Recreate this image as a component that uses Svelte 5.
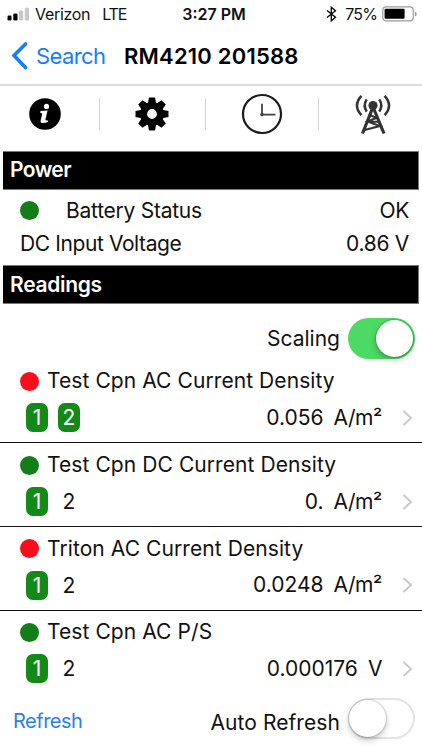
<script>
    let scaling = $state(true);
    let autoRefresh = $state(false);

    const readings = [
        { name: 'Test Cpn AC Current Density', color: 'red', value: '0.056', unit: 'A/m²', active: [1, 2] },
        { name: 'Test Cpn DC Current Density', color: 'green', value: '0.', unit: 'A/m²', active: [1] },
        { name: 'Triton AC Current Density', color: 'red', value: '0.0248', unit: 'A/m²', active: [1] },
        { name: 'Test Cpn AC P/S', color: 'green', value: '0.000176', unit: 'V', active: [1] }
    ];
</script>

<main>
    <div class="status-bar">
        <div class="carrier">
            <svg width="23" height="14" viewBox="0 0 23 14">
                <rect x="0.5" y="8.5" width="4" height="5" rx="1.2" fill="#000" />
                <rect x="6.3" y="6.5" width="4.2" height="7" rx="1.2" fill="#000" />
                <rect x="12" y="3.5" width="4.2" height="10" rx="1.2" fill="#c8c8c8" />
                <rect x="17.8" y="0.7" width="4.2" height="12.8" rx="1.2" fill="#c8c8c8" />
            </svg>
            <span class="network">Verizon</span>
            <span class="lte">LTE</span>
        </div>
        <span class="time">3:27 PM</span>
        <div class="power">
            <svg width="11" height="16" viewBox="0 0 11 16">
                <path d="M1 4.4L9.5 11.3L5.3 14.8V1.2L9.5 4.7L1 11.6" fill="none" stroke="#000" stroke-width="1.3" />
            </svg>
            <span class="percent">75%</span>
            <svg class="battery" width="36" height="16" viewBox="0 0 36 16">
                <rect x="0.8" y="0.8" width="30.4" height="14" rx="3" fill="#fff" stroke="#999" stroke-width="1.2" />
                <rect x="2.6" y="2.8" width="20" height="10" rx="1" fill="#000" />
                <path d="M32.8 5.4q2 .7 2 2.5t-2 2.5z" fill="#999" />
            </svg>
        </div>
    </div>

    <header>
        <button class="back">
            <svg width="18" height="30" viewBox="0 0 18 30">
                <path d="M15.5 3L4 14.5L15.5 26.5" fill="none" stroke="#147efb" stroke-width="3.6" stroke-linecap="round" />
            </svg>
            <span>Search</span>
        </button>
        <h1>RM4210 201588</h1>
    </header>

    <nav>
        <button aria-label="Info">
            <svg width="32" height="32" viewBox="0 0 32 32">
                <circle cx="16" cy="16" r="15.8" />
                <circle cx="17.5" cy="8.4" r="2.6" fill="#fff" />
                <path d="M11.5 13.1q3.7-.6 7.1-.7l-2.2 9.2q-.3 1.5 2.9.8l-.4 1.6q-3 1.2-5.7 1-2.1-.3-1.5-2.8l1.5-6.1q.3-1.3-2-1.2z" fill="#fff" />
            </svg>
        </button>
        <button aria-label="Settings">
            <svg width="34" height="34" viewBox="-17 -17 34 34">
                {#each [0, 45, 90, 135, 180, 225, 270, 315] as angle}
                    <path d="M-4.5-9L-3-16.5H3L4.5-9z" transform="rotate({angle})" />
                {/each}
                <circle r="8.4" fill="none" stroke="#000" stroke-width="7" />
            </svg>
        </button>
        <button aria-label="History">
            <svg width="42" height="42" viewBox="0 0 42 42" fill="none">
                <circle cx="21" cy="21" r="19" stroke="#1a1a1a" stroke-width="2.2" />
                <path d="M21 10.8V21.6H34.5" stroke="#444" stroke-width="1.8" />
                <circle cx="21" cy="21.6" r="1.8" fill="#444" />
            </svg>
        </button>
        <button aria-label="Radio">
            <svg width="36" height="42" viewBox="0 0 36 42" fill="none" stroke="#333" stroke-width="2.5">
                <circle cx="18" cy="12.5" r="4.6" fill="#333" stroke="none" />
                <path d="M18 14L7.5 40.5M18 14L29 40.5" stroke-width="3.2" />
                <path d="M15 22L21.5 25L12.5 28.5L25 33L9.5 37M13 28.7H23" stroke-width="2" />
                <path d="M11.7 6.4Q7.7 12.5 11.7 18.6M24.3 6.4Q28.3 12.5 24.3 18.6" />
                <path d="M6.4 2.8Q-2.5 12.5 6.4 22.2M29.6 2.8Q38.5 12.5 29.6 22.2" />
            </svg>
        </button>
    </nav>

    <h2>Power</h2>
    <section class="supply">
        <div class="line">
            <span class="dot green"></span>
            <span class="battery-label">Battery Status</span>
            <span class="amount">OK</span>
        </div>
        <div class="line">
            <span class="voltage-label">DC Input Voltage</span>
            <span class="amount">0.86 V</span>
        </div>
    </section>

    <h2 class="readings-title">Readings</h2>
    <div class="scaling">
        <span>Scaling</span>
        <button class="switch" class:on={scaling} aria-label="Scaling" onclick={() => (scaling = !scaling)}>
            <i></i>
        </button>
    </div>

    <section class="readings">
        {#each readings as reading}
            <article>
                <div class="name">
                    <span class="dot {reading.color}"></span>
                    <span>{reading.name}</span>
                </div>
                <div class="detail">
                    {#each [1, 2] as channel}
                        <span class="chip" class:active={reading.active.includes(channel)}>{channel}</span>
                    {/each}
                    <span class="value">{reading.value}</span>
                    <span class="unit">{reading.unit}</span>
                    <svg width="12" height="18" viewBox="0 0 12 18">
                        <path d="M1.5 2L9 9L1.5 16" fill="none" stroke="#c7c7cc" stroke-width="1.9" />
                    </svg>
                </div>
            </article>
        {/each}
    </section>

    <footer>
        <button class="refresh">Refresh</button>
        <span class="auto">Auto Refresh</span>
        <button class="switch" class:on={autoRefresh} aria-label="Auto Refresh" onclick={() => (autoRefresh = !autoRefresh)}>
            <i></i>
        </button>
    </footer>
</main>

<style>
    :global(body) { margin: 0; background: #fff; }
    main { width: 422px; height: 750px; overflow: hidden; background: #fff; color: #111; font-family: Inter, Roboto, sans-serif; font-size: 21px; line-height: 26px; white-space: nowrap; }
    button { margin: 0; padding: 0; border: 0; background: none; font: inherit; color: inherit; cursor: pointer; }
    svg { display: block; flex: none; }

    .status-bar { display: grid; grid-template-columns: 1fr auto 1fr; align-items: center; height: 28px; padding: 0 7px; font-size: 16px; line-height: 20px; }
    .carrier { display: flex; align-items: center; }
    .network { margin-left: 5px; letter-spacing: -0.3px; }
    .lte { margin-left: 12px; letter-spacing: -1.2px; }
    .time { margin-left: 6px; font-weight: 600; }
    .power { display: flex; align-items: center; justify-content: flex-end; }
    .percent { margin-left: 8px; letter-spacing: -0.9px; }
    .battery { margin-left: 5px; margin-right: -3px; }

    header { display: flex; align-items: center; height: 56px; border-bottom: 2px solid #dcdcdc; }
    .back { display: flex; align-items: center; box-sizing: border-box; width: 124px; padding-left: 10px; color: #147efb; font-size: 22px; }
    .back span { margin-left: 8px; letter-spacing: -0.6px; }
    h1 { margin: 0; color: #000; font-size: 22px; font-weight: 600; letter-spacing: 0.2px; }

    nav { display: grid; grid-template-columns: 100px 106px 113px 103px; align-items: center; height: 55px; padding-bottom: 10px; }
    nav button { display: flex; align-items: center; justify-content: center; height: 32px; padding-right: 1px; border-right: 1.5px solid #d4d4d4; }
    nav button:first-child { justify-content: flex-start; padding-left: 29px; }
    nav button:last-child { border: 0; padding-left: 6px; }

    h2 { box-sizing: border-box; height: 39px; margin: 0 3px; padding: 5px 7px; border: 1px solid #777; border-width: 1px 1px 1px 0; background: #000; color: #fff; font-size: 21px; font-weight: 600; line-height: 26px; letter-spacing: -0.6px; }
    .readings-title { padding-top: 6px; letter-spacing: -0.3px; }
    .supply { height: 75px; box-sizing: border-box; padding: 4px 13px 0 20px; }
    .line { display: flex; align-items: center; height: 33.5px; }
    .dot { flex: none; width: 19px; height: 19px; border-radius: 50%; }
    .green { background: #137e17; }
    .red { background: #fc0d1b; }
    .battery-label { margin-left: 27px; letter-spacing: -0.25px; }
    .voltage-label { letter-spacing: -0.4px; }
    .amount { margin-left: auto; letter-spacing: -0.3px; }

    .scaling { display: flex; align-items: center; justify-content: flex-end; gap: 8px; height: 41px; padding: 14px 7px 0.8px 0; }
    .switch { position: relative; flex: none; width: 67px; height: 41px; border-radius: 21px; box-shadow: inset 0 0 0 2px #e3e3e3; }
    .switch i { position: absolute; top: 2px; left: 1px; width: 37px; height: 37px; border-radius: 50%; background: #fff; box-shadow: 0 3px 6px rgba(0, 0, 0, 0.25), 0 0 1px 1px rgba(0, 0, 0, 0.12); }
    .switch.on { background: #4cd964; box-shadow: none; }
    .switch.on i { left: 28px; }

    article { box-sizing: border-box; height: 83.67px; padding: 8.6px 8px 0 20px; border-bottom: 1px solid #111; }
    article:last-child { border: 0; }
    .name { display: flex; align-items: center; gap: 8px; height: 26px; letter-spacing: 0.08px; }
    .detail { display: flex; align-items: center; height: 29px; margin-top: 9px; padding-left: 6px; }
    .chip { width: 22px; height: 29px; margin-right: 10px; border-radius: 7px; line-height: 29px; text-align: center; }
    .chip.active { background: #138a18; color: #fff; }
    .value { margin-left: auto; }
    .unit { margin: 0 20px 0 10px; letter-spacing: -0.4px; }

    footer { display: flex; align-items: center; height: 52.5px; padding: 0 7px 0 13px; }
    .refresh { color: #2a80e8; font-size: 20px; letter-spacing: -0.5px; }
    .auto { margin: 5px 8px 0 auto; letter-spacing: 0.08px; }
    footer .switch { margin-top: -4px; }
</style>
